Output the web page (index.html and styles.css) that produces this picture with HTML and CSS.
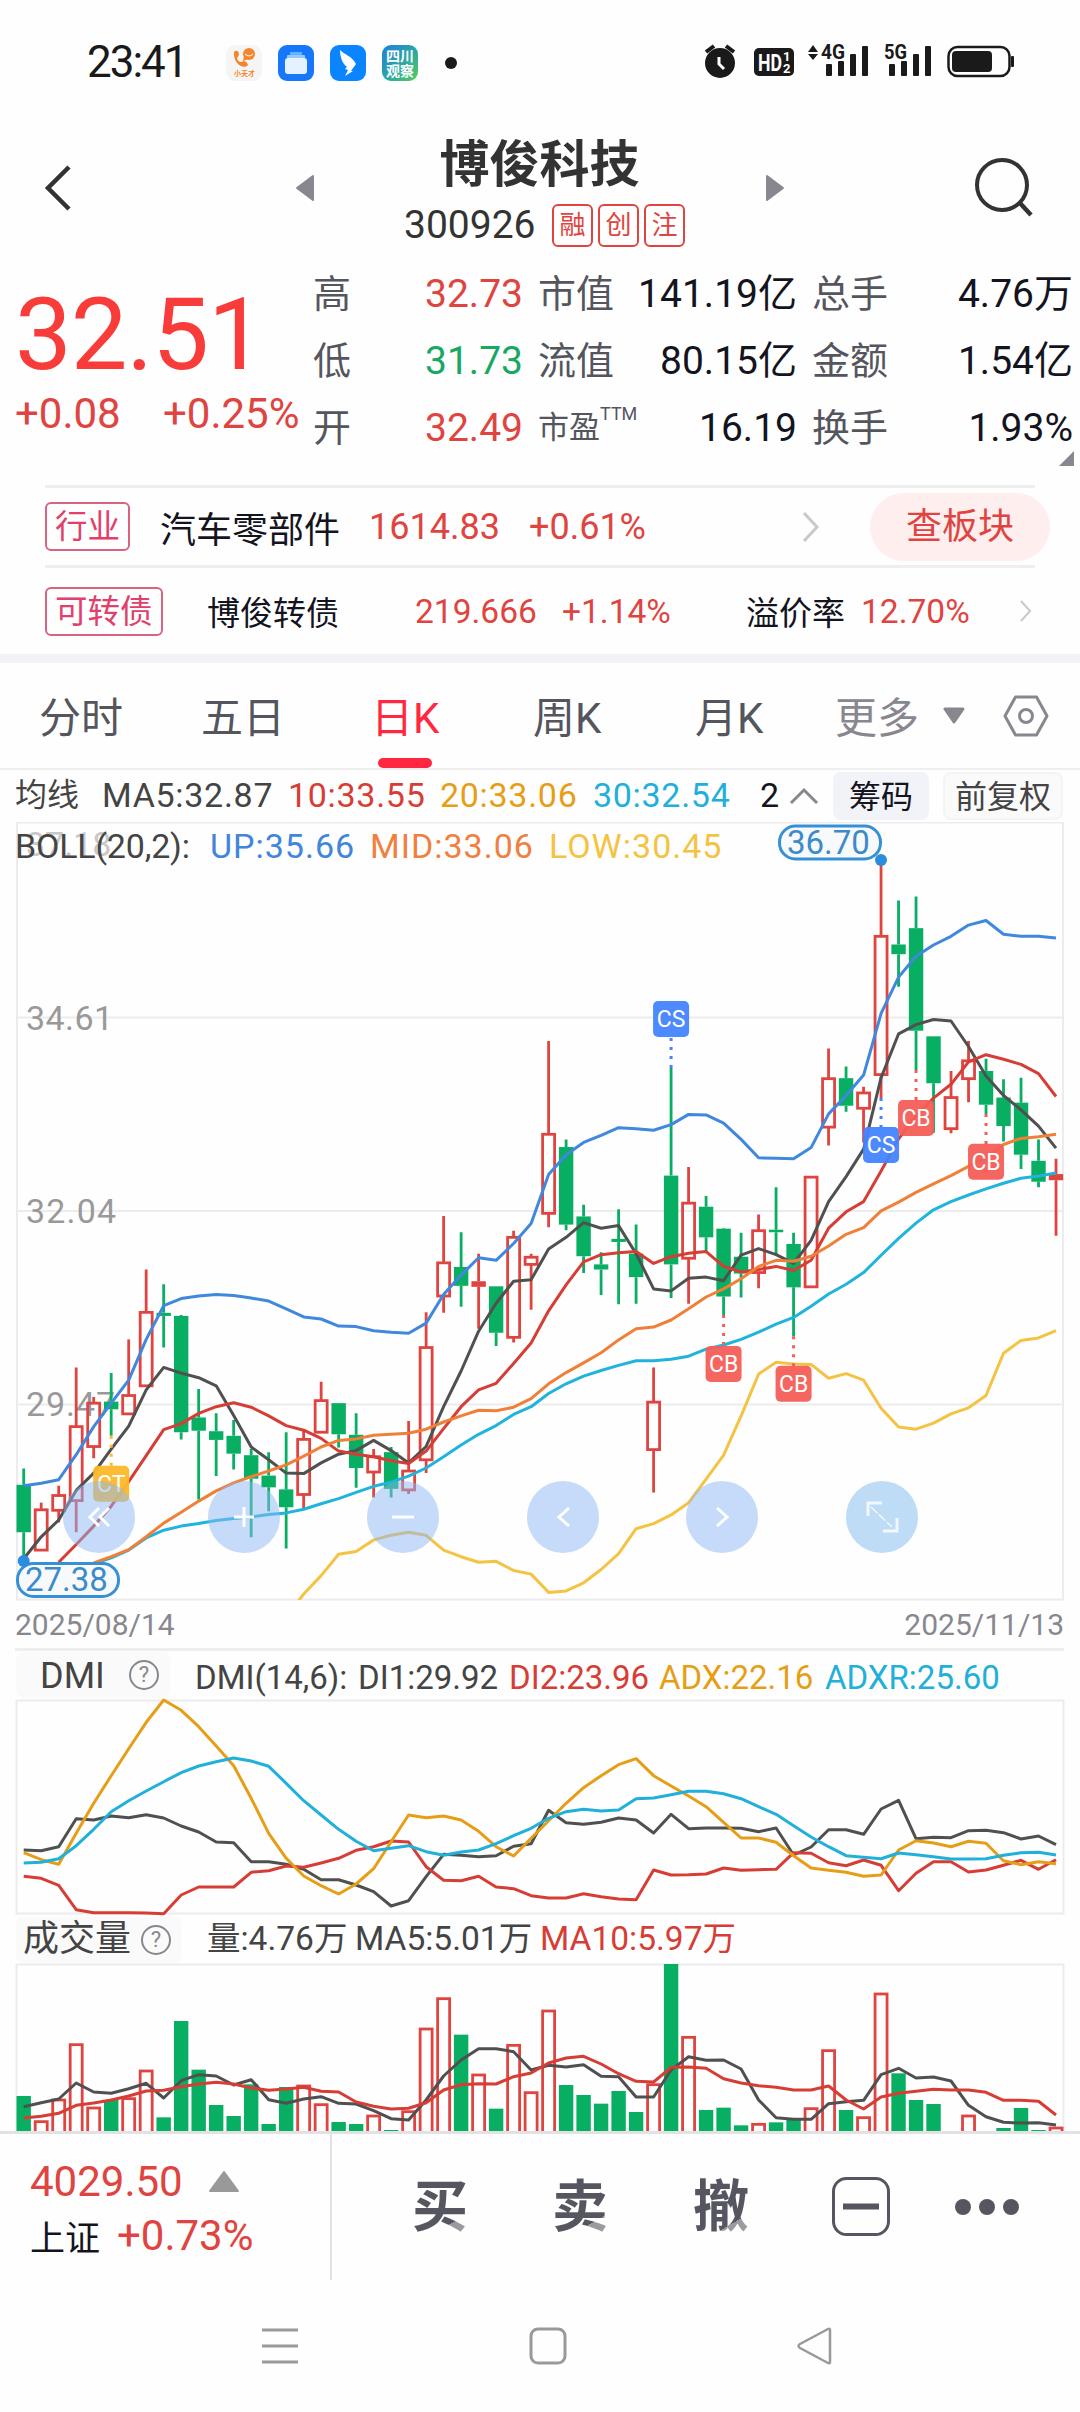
FILE: index.html
```html
<!DOCTYPE html>
<html lang="zh-CN">
<head>
  <meta charset="UTF-8" />
  <meta name="viewport" content="width=device-width, initial-scale=1.0"/>
  <title>博俊科技 300926</title>
  <link rel="stylesheet" href="styles.css">
</head>
<body>
  <div class="status-bar">
    <span class="clock">23:41</span>
    <div class="app-icons">
      <svg width="36" height="36" viewBox="0 0 36 36">
        <rect width="36" height="36" rx="9" fill="#f5f5f5"/>
        <path d="M8 7c3-3 5 0 5 3l-2 3c0 2 2 4 4 4l3-1c2 0 4 3 4 4-4 5-15-1-14-13z" fill="#f5852a"/>
        <circle cx="23" cy="9" r="6" fill="#f5852a"/>
        <path d="M18 11l-1 5 5-2z" fill="#f5852a"/>
        <path d="M19 9q4 4 8 0" stroke="#fff" fill="none"/>
        <text x="8" y="31" font-size="7" font-weight="bold" fill="#f5852a">小天才</text>
      </svg>
      <svg width="36" height="36" viewBox="0 0 36 36">
        <rect width="36" height="36" rx="9" fill="#1677fb"/>
        <rect x="12" y="7" width="12" height="3" rx="1" fill="#68b2fd"/>
        <rect x="9" y="10" width="18" height="4" rx="1" fill="#93c8fe"/>
        <rect x="7" y="13" width="22" height="16" rx="3" fill="#e6f1ff"/>
      </svg>
      <svg width="36" height="36" viewBox="0 0 36 36">
        <rect width="36" height="36" rx="9" fill="#0a84ff"/>
        <path d="M10 5c5 5 12 6 16 14l-5 7h2l-8 5 3-6-3-1 2-2c-4-3-7-9-7-17z" fill="#fff"/>
      </svg>
      <svg width="36" height="36" viewBox="0 0 36 36">
        <defs>
          <linearGradient id="scg" x1="0" y1="0" x2="1" y2="1">
            <stop offset="0" stop-color="#1f7fd8"/>
            <stop offset=".55" stop-color="#2ba8a4"/>
            <stop offset="1" stop-color="#55cf5a"/>
          </linearGradient>
        </defs>
        <rect width="36" height="36" rx="9" fill="url(#scg)"/>
        <text x="4" y="16" font-size="14" font-weight="bold" fill="#fff">四川</text>
        <text x="4" y="31" font-size="14" font-weight="bold" fill="#fff">观察</text>
      </svg>
      <i class="more-dot"></i>
    </div>
    <svg class="sys-icons" width="320" height="36" viewBox="0 0 320 36" fill="#1a1a1a">
      <circle cx="16" cy="19" r="15"/>
      <path d="M2 8l8-6M30 8l-8-6" stroke="#1a1a1a" stroke-width="4"/>
      <path d="M15 13v7l5 5" stroke="#fff" stroke-width="3" fill="none"/>
      <rect x="50" y="4" width="40" height="28" rx="5"/>
      <text x="54" y="27" font-size="23" font-weight="bold" fill="#fff" textLength="24" lengthAdjust="spacingAndGlyphs">HD</text>
      <text x="79" y="17" font-size="13" font-weight="bold" fill="#fff">1</text>
      <text x="79" y="29" font-size="13" font-weight="bold" fill="#fff">2</text>
      <path d="M104 8l5-7 5 7zM104 10l5 6 5-6z"/>
      <text x="117" y="15" font-size="20" font-weight="bold" textLength="24" lengthAdjust="spacingAndGlyphs">4G</text>
      <rect x="122" y="20" width="6" height="12" rx="1"/>
      <rect x="134" y="17" width="6" height="15" rx="1"/>
      <rect x="146" y="10" width="6" height="22" rx="1"/>
      <rect x="158" y="2" width="6" height="30" rx="1"/>
      <text x="180" y="15" font-size="20" font-weight="bold" textLength="23" lengthAdjust="spacingAndGlyphs">5G</text>
      <rect x="185" y="20" width="6" height="12" rx="1"/>
      <rect x="197" y="17" width="6" height="15" rx="1"/>
      <rect x="209" y="10" width="6" height="22" rx="1"/>
      <rect x="221" y="2" width="6" height="30" rx="1"/>
      <rect x="244.500" y="3" width="61" height="29" rx="9" fill="none" stroke="#1a1a1a" stroke-width="2.500"/>
      <rect x="248" y="7" width="40" height="21" rx="4"/>
      <rect x="307" y="12" width="3" height="11" rx="1"/>
    </svg>
  </div>

  <div class="header">
    <svg class="back" width="28" height="46" viewBox="0 0 28 46"><path d="M25 2L4 23l21 21" fill="none" stroke="#333" stroke-width="4.500"/></svg>
    <svg class="prev" width="20" height="28" viewBox="0 0 20 28"><path d="M18 2v24L2 14z" fill="#88878f" stroke="#88878f" stroke-width="2" stroke-linejoin="round"/></svg>
    <div class="title">
      <h1>博俊科技</h1>
      <div class="code-row">
        <span class="code">300926</span>
        <span class="mini-tag">融</span>
        <span class="mini-tag">创</span>
        <span class="mini-tag">注</span>
      </div>
    </div>
    <svg class="next" width="20" height="28" viewBox="0 0 20 28"><path d="M2 2v24l16-12z" fill="#88878f" stroke="#88878f" stroke-width="2" stroke-linejoin="round"/></svg>
    <svg class="search" width="60" height="62" viewBox="0 0 60 62"><circle cx="28" cy="28" r="25" fill="none" stroke="#333" stroke-width="4"/><path d="M45 45l12 13" stroke="#333" stroke-width="4.500"/></svg>
  </div>

  <div class="quote">
    <div class="price-box">
      <div class="price">32.51</div>
      <div class="change"><span>+0.08</span><span>+0.25%</span></div>
    </div>
    <div class="stats">
      <span class="label">高</span><span class="val up">32.73</span>
      <span class="label">市值</span><span class="val">141.19亿</span>
      <span class="label">总手</span><span class="val">4.76万</span>
      <span class="label">低</span><span class="val down">31.73</span>
      <span class="label">流值</span><span class="val">80.15亿</span>
      <span class="label">金额</span><span class="val">1.54亿</span>
      <span class="label">开</span><span class="val up">32.49</span>
      <span class="label pe">市盈<sup>TTM</sup></span><span class="val">16.19</span>
      <span class="label">换手</span><span class="val">1.93%</span>
    </div>
    <svg class="corner" width="15" height="15" viewBox="0 0 15 15"><path d="M15 0v15H0z" fill="#88878f"/></svg>
  </div>

  <div class="link-row industry">
    <span class="tag">行业</span>
    <span class="dark">汽车零部件</span>
    <span class="up">1614.83</span>
    <span class="up">+0.61%</span>
    <svg width="18" height="32" viewBox="0 0 18 32"><path d="M2 2l13 14L2 30" fill="none" stroke="#c9c9c9" stroke-width="3"/></svg>
    <span class="pill">查板块</span>
  </div>
  <div class="link-row bond">
    <span class="tag">可转债</span>
    <span class="dark">博俊转债</span>
    <span class="up">219.666</span>
    <span class="up">+1.14%</span>
    <span class="dark">溢价率</span>
    <span class="up">12.70%</span>
    <svg width="13" height="24" viewBox="0 0 13 24"><path d="M2 2l9 10L2 22" fill="none" stroke="#c9c9c9" stroke-width="2"/></svg>
  </div>

  <div class="tabs">
    <span>分时</span>
    <span>五日</span>
    <span class="active">日K</span>
    <span>周K</span>
    <span>月K</span>
    <span class="more">更多</span>
    <svg width="22" height="18" viewBox="0 0 22 18"><path d="M2 2h18l-9 13z" fill="#88878f" stroke="#88878f" stroke-width="3" stroke-linejoin="round"/></svg>
    <svg width="46" height="42" viewBox="0 0 46 42" fill="none" stroke="#88878f" stroke-width="3"><path d="M12.500 2h21L44 21 33.500 40h-21L2 21z" stroke-linejoin="round"/><circle cx="23" cy="21" r="6.500"/></svg>
  </div>

  <div class="ma-row">
    <span>均线</span>
    <span>MA5:32.87</span>
    <span class="red">10:33.55</span>
    <span class="gold">20:33.06</span>
    <span class="cyan">30:32.54</span>
    <span class="dark">2</span>
    <svg width="30" height="18" viewBox="0 0 30 18"><path d="M2 16L15 3l13 13" fill="none" stroke="#88878f" stroke-width="3"/></svg>
    <span class="chip chip-on">筹码</span>
    <span class="chip">前复权</span>
  </div>

  <div class="k-chart">
    <svg id="kline" width="1080" height="782" viewBox="0 2 1080 782">
      <clipPath id="frame"><rect x="16" y="2" width="1048" height="778"/></clipPath>
      <g stroke="#ececee" stroke-width="2" fill="none">
        <rect x="17" y="2.500" width="1046" height="777"/>
        <path d="M17 197.500h1046M17 391h1046M17 584.500h1046"/>
      </g>
      <g font-size="34" fill="#999">
        <text x="26" y="36" fill="#c8c8c8">37.18</text>
        <text x="26" y="210" textLength="87">34.61</text>
        <text x="26" y="403" textLength="90">32.04</text>
        <text x="26" y="596" textLength="89">29.47</text>
      </g>
      <g id="candles"></g>
      <g id="klines" fill="none" stroke-width="3" clip-path="url(#frame)"></g>
      <g id="flags"></g>
      <g fill="#f8f9fa" stroke="#3690d6" stroke-width="3">
        <rect x="779.500" y="6" width="101" height="33" rx="16"/>
        <rect x="17.500" y="743.500" width="101" height="33" rx="16"/>
      </g>
      <g font-size="33" fill="#3b8bcb">
        <text x="787" y="34">36.70</text>
        <text x="25" y="771">27.38</text>
      </g>
      <circle cx="881" cy="40" r="6" fill="#2c8de0"/>
      <circle cx="23.700" cy="741" r="6" fill="#2c8de0"/>
      <g fill="#8cb8f3" fill-opacity=".5">
        <circle cx="99" cy="697" r="36"/>
        <circle cx="244" cy="697" r="36"/>
        <circle cx="403" cy="697" r="36"/>
        <circle cx="563" cy="697" r="36"/>
        <circle cx="722" cy="697" r="36"/>
        <circle cx="882" cy="697" r="36" fill="#80b9ee"/>
      </g>
      <g fill="none" stroke="#fff" stroke-width="3">
        <path d="M99 688l-9 9 9 9M109 688l-9 9 9 9"/>
        <path d="M234 697h20M244 687v20M392 697h22"/>
        <path d="M569 688l-10 9 10 9M717 688l10 9-10 9"/>
        <path d="M868 696v-13h14M883 711h14v-13" opacity=".8"/>
        <path d="M871 687l21 20" stroke-width="1.500" stroke-dasharray="9 2" opacity=".8"/>
      </g>
    </svg>
    <div class="boll-row">
      <span>BOLL(20,2):</span>
      <span class="blue">UP:35.66</span>
      <span class="orange">MID:33.06</span>
      <span class="yellow">LOW:30.45</span>
    </div>
  </div>
  <div class="dates"><span>2025/08/14</span><span>2025/11/13</span></div>

  <div class="ind-row dmi-row">
    <span class="ind-tag">DMI<i class="help">?</i></span>
    <span>DMI(14,6):</span>
    <span>DI1:29.92</span>
    <span class="red">DI2:23.96</span>
    <span class="gold">ADX:22.16</span>
    <span class="cyan">ADXR:25.60</span>
  </div>
  <svg class="sub-chart" width="1080" height="218" viewBox="0 98 1080 218">
    <rect x="16.500" y="100.500" width="1047" height="213" fill="none" stroke="#ececee" stroke-width="2"/>
    <g id="dmi" fill="none" stroke-width="3"></g>
  </svg>

  <div class="ind-row vol-row">
    <span class="ind-tag">成交量<i class="help">?</i></span>
    <span>量:4.76万</span>
    <span>MA5:5.01万</span>
    <span class="red">MA10:5.97万</span>
  </div>
  <svg class="sub-chart" width="1080" height="168" viewBox="0 63 1080 168">
    <path d="M16.500 231V64.500h1047V231" fill="none" stroke="#ececee" stroke-width="2"/>
    <g id="volume"></g>
    <g id="vol-ma" fill="none" stroke-width="3"></g>
  </svg>

  <div class="trade-bar">
    <div class="index-box">
      <div class="index-top">4029.50<svg width="32" height="22" viewBox="0 0 32 22"><path d="M16 2L30 21H2z" fill="#999" stroke="#999" stroke-width="2" stroke-linejoin="round"/></svg></div>
      <div class="index-bottom"><span>上证</span><b>+0.73%</b></div>
    </div>
    <div class="actions">
      <span>买</span>
      <span>卖</span>
      <span>撤</span>
      <svg width="58" height="60" viewBox="0 0 58 60"><rect x="1.500" y="1.500" width="55" height="56" rx="13" fill="none" stroke="#555660" stroke-width="3"/><path d="M11 29.500h36" stroke="#555660" stroke-width="6"/></svg>
      <svg width="66" height="18" viewBox="0 0 66 18" fill="#555660"><circle cx="9" cy="9" r="8"/><circle cx="33" cy="9" r="8"/><circle cx="57" cy="9" r="8"/></svg>
    </div>
  </div>

  <div class="nav-bar">
    <svg width="38" height="38" viewBox="0 0 38 38" stroke="#999" stroke-width="3"><path d="M1 3h36M1 19h36M1 35h36"/></svg>
    <svg width="38" height="38" viewBox="0 0 38 38" fill="none" stroke="#999" stroke-width="3"><rect x="2" y="2" width="34" height="34" rx="7"/></svg>
    <svg width="38" height="38" viewBox="0 0 38 38" fill="none" stroke="#999" stroke-width="2.500" stroke-linejoin="round"><path d="M33 3v32q0 2-2 1L3 21q-3-2 0-4L31 2q2-1 2 1z"/></svg>
  </div>

  <script src="chart.js"></script>
</body>
</html>
```

FILE: styles.css
```css
* {
  box-sizing: border-box;
}

body {
  margin: 0;
  width: 1080px;
  height: 2412px;
  overflow: hidden;
  background: #fefefe;
  color: #444;
  font-family: Roboto, "Noto Sans CJK SC", sans-serif;
}

svg {
  display: block;
}

.up { color: #e04440; }
.down { color: #18a863; }
.dark { color: #14141f; }
.red { color: #d63d35; }
.gold { color: #e69e17; }
.cyan { color: #20b0da; }
.blue { color: #4185dc; }
.orange { color: #f08040; }
.yellow { color: #f5c344; }

/* status bar */
.status-bar {
  height: 124px;
  display: flex;
  align-items: center;
  padding-left: 87px;
}

.clock {
  width: 139px;
  font-size: 44px;
  letter-spacing: -2px;
  color: #1a1a1a;
}

.app-icons {
  display: flex;
  align-items: center;
  gap: 16px;
  width: 473px;
  padding-top: 2px;
}

.more-dot {
  width: 12px;
  height: 12px;
  margin-left: 11px;
  border-radius: 50%;
  background: #1a1a1a;
}

.sys-icons {
  margin-left: 5px;
  overflow: visible;
}

/* header */
.header {
  height: 136px;
  display: grid;
  grid-template-columns: 295px 92px 378px 209px 1fr;
}

.back { margin: 41px 0 0 44px; }
.prev { margin-top: 50px; }
.title { text-align: center; width: 305px; }
.next { margin-top: 50px; }
.search { margin-top: 33px; }

.title h1 {
  margin: 0;
  padding-top: 3px;
  font-size: 50px;
  line-height: 76px;
  color: #333;
}

.code-row {
  display: flex;
  gap: 5px;
  padding-left: 17px;
  align-items: center;
  height: 46px;
  margin-top: -1px;
}

.code {
  width: 143px;
  font-size: 39px;
  text-align: left;
  color: #333;
}

.mini-tag {
  width: 41px;
  height: 43px;
  border: 2px solid #e04440;
  border-radius: 6px;
  font-size: 26px;
  line-height: 38px;
  color: #e04440;
}

/* quote */
.quote {
  position: relative;
  display: flex;
  height: 225px;
}

.price-box {
  width: 313px;
  padding-left: 15px;
}

.price {
  height: 129px;
  padding-top: 16px;
  font-size: 101px;
  line-height: 118px;
  letter-spacing: -1px;
  color: #f83c3a;
}

.change {
  display: flex;
  font-size: 42px;
  line-height: 50px;
  color: #e04440;
}

.change span {
  width: 148px;
}

.stats {
  display: grid;
  grid-template-columns: 82px 128px 98px 176px 98px 178px;
  grid-template-rows: repeat(3, 67px);
  line-height: 68px;
}

.label {
  font-size: 38px;
  color: #55555e;
  white-space: nowrap;
}

.val {
  font-size: 39px;
  text-align: right;
  color: #14141f;
}

.val.up { color: #e04440; }
.val.down { color: #18a863; }
.stats .label:nth-child(6n+3),
.stats .label:nth-child(6n+5) { padding-left: 15px; }

.label.pe {
  font-size: 31px;
}

.pe sup {
  font-size: 18px;
  line-height: 0;
  vertical-align: 18px;
}

.corner {
  position: absolute;
  left: 1059px;
  top: 191px;
}

/* industry and bond rows */
.link-row {
  display: grid;
  align-items: center;
  margin: 0 45px;
  border-top: 3px solid #eeeeee;
  white-space: nowrap;
}

.industry {
  height: 80px;
  grid-template-columns: 115px 209px 160px 273px 68px 180px;
  font-size: 36px;
  width: 990px;
}

.bond {
  height: 89px;
  grid-template-columns: 162px 208px 147px 184px 115px 158px 13px;
  font-size: 33px;
  width: 990px;
}

.bond .up {
  font-size: 33.5px;
}

.tag {
  justify-self: start;
  height: 49px;
  padding: 0 8px;
  border: 2px solid #d96482;
  border-radius: 6px;
  font-size: 32.5px;
  line-height: 47px;
  color: #e0406a;
}

.pill {
  height: 68px;
  border-radius: 34px;
  background: #ffeeee;
  color: #e04440;
  text-align: center;
  line-height: 69px;
}

/* tabs */
.tabs {
  display: grid;
  grid-template-columns: 162px 170px 162px 162px 140px 108px 60px 46px;
  align-items: center;
  height: 116px;
  padding: 0 0 0 39px;
  border-top: 9px solid #f2f3f8;
  border-bottom: 2px solid #eeeeee;
  font-size: 42px;
  line-height: 105px;
  color: #55555e;
}

.tabs span {
  padding-top: 3px;
  height: 105px;
}

.tabs .active {
  position: relative;
  color: #ff2840;
}

.tabs .active::after {
  content: "";
  position: absolute;
  left: 7px;
  bottom: 0;
  width: 54px;
  height: 10px;
  border-radius: 5px;
  background: #ff2840;
}

.tabs .more {
  color: #88878f;
}

/* moving averages */
.ma-row {
  display: grid;
  grid-template-columns: 87px 186px 152px 153px 167px 29px 44px 110px 120px;
  align-items: center;
  height: 52px;
  padding-left: 15px;
  font-size: 34px;
  letter-spacing: 0.7px;
  line-height: 50px;
  white-space: nowrap;
}

.ma-row span {
  height: 52px;
}

.ma-row span:first-child {
  font-size: 32px;
  letter-spacing: 0;
}

.ma-row .chip {
  width: 120px;
  height: 48px;
  border: 2px solid #f4f4f4;
  border-radius: 8px;
  background: #fafafa;
  font-size: 32px;
  letter-spacing: 0;
  line-height: 46px;
  text-align: center;
}

.ma-row .chip-on {
  width: 96px;
  border-color: #f2f3f8;
  background: #f2f3f8;
  color: #14141f;
}

.k-chart {
  position: relative;
  height: 782px;
}

.boll-row {
  position: absolute;
  left: 15px;
  top: 3px;
  display: grid;
  grid-template-columns: 195px 160px 179px 180px;
  font-size: 34px;
  line-height: 42px;
  letter-spacing: 1px;
}

.boll-row span:first-child {
  letter-spacing: -0.2px;
}

.dates {
  display: flex;
  justify-content: space-between;
  height: 47px;
  margin: 0 16px 0 15px;
  border-bottom: 3px solid #eeeeee;
  font-size: 30px;
  line-height: 42px;
  color: #88878f;
}

/* indicators */
.ind-row {
  display: grid;
  align-items: center;
  height: 47px;
  padding-left: 16px;
  font-size: 33px;
  white-space: nowrap;
}

.dmi-row {
  grid-template-columns: 179px 163px 151px 150px 166px 180px;
}

.dmi-row > span {
  height: 46px;
  padding-top: 3px;
  line-height: 46px;
}

.vol-row {
  grid-template-columns: 191px 148px 185px 200px;
  font-size: 33.5px;
}

.vol-row > span {
  height: 46px;
  line-height: 43px;
}

.ind-row .ind-tag {
  display: flex;
  align-items: center;
  justify-content: space-between;
  width: 154px;
  height: 46px;
  padding: 2px 11px 0 24px;
  border-radius: 8px;
  background: #fafafa;
  font-size: 36px;
}

.vol-row .ind-tag {
  width: 166px;
  padding: 0 11px 0 7px;
}

.help {
  width: 30px;
  height: 30px;
  border: 2px solid #88878f;
  border-radius: 50%;
  font-size: 22px;
  line-height: 26px;
  text-align: center;
  font-style: normal;
  color: #88878f;
}

.dmi-row .help {
  margin-top: -2px;
}

/* bottom bar */
.trade-bar {
  display: flex;
  height: 149px;
  border-top: 3px solid #e2e2e4;
}

.index-box {
  width: 332px;
  padding: 22px 0 0 30px;
  border-right: 2px solid #e2e2e4;
  font-size: 42px;
  color: #e04440;
}

.index-top {
  display: flex;
  align-items: center;
  gap: 25px;
  height: 50px;
}

.index-bottom {
  display: flex;
  align-items: center;
  height: 58px;
}

.index-bottom span {
  width: 87px;
  font-size: 35px;
  color: #14141f;
}

.index-bottom b {
  font-weight: normal;
}

.actions {
  display: grid;
  grid-template-columns: 140px 141px 139px 122px 66px;
  align-items: center;
  height: 146px;
  padding-left: 80px;
}

.actions span {
  width: 56px;
  font-size: 56px;
  font-weight: bold;
  line-height: 72px;
  color: transparent;
  background: linear-gradient(150deg, #555660 72%, #9b9b9f 72%);
  -webkit-background-clip: text;
  background-clip: text;
}

.nav-bar {
  display: flex;
  align-items: center;
  gap: 230px;
  height: 132px;
  padding-left: 261px;
}
```

FILE: chart.js
```js
const NS = "http://www.w3.org/2000/svg";
const RED = "#e04440";
const GREEN = "#08ae62";

// vertical divisors from data units to pixels
const K_DIV = 1.96;
const SUB_DIV = 3;

function x(i) {
  return 23.7 + i * 17.497;
}

function add(parent, tag, attrs, text) {
  const el = document.createElementNS(NS, tag);
  for (const key in attrs) el.setAttribute(key, attrs[key]);
  if (text) el.textContent = text;
  parent.appendChild(el);
  return el;
}

function line(parent, start, values, div, color) {
  const points = values.map((v, i) => `${x(start + i).toFixed(1)},${(v / div).toFixed(1)}`).join(" ");
  add(parent, "polyline", { points, stroke: color, "stroke-linejoin": "round" });
}

// colour, high, body top, body bottom, low ("f" is a filled red doji)
const candles = [
  ["g",1271,1303,1396,1450],["r",1338,1352,1431,1431],["r",1305,1324,1353,1377],["r",1073,1189,1334,1396],
  ["r",1131,1143,1228,1251],["g",1084,1140,1155,1207],["r",1018,1128,1164,1164],["r",881,965,1109,1109],
  ["g",910,966,972,1034],["g",970,972,1200,1214],["g",1115,1171,1197,1332],["g",1163,1198,1215,1286],
  ["g",1176,1207,1242,1273],["g",1233,1245,1291,1406],["g",1239,1285,1308,1355],["g",1200,1312,1347,1428],
  ["r",1197,1214,1322,1349],["r",1101,1138,1200,1200],["g",1143,1143,1204,1230],["g",1163,1205,1270,1309],
  ["r",1233,1248,1278,1328],["g",1229,1239,1311,1328],["r",1178,1276,1313,1321],["r",965,1034,1254,1280],
  ["r",776,868,933,966],["g",808,876,913,954],["f",850,904,915,997],["g",914,914,1005,1031],
  ["r",805,818,1014,1024],["r",850,857,871,960],["r",433,616,771,798],["g",626,641,793,804],
  ["g",754,777,855,888],["g",847,871,881,931],["g",763,821,827,949],["g",793,850,896,948],
  ["r",1073,1141,1234,1318],["g",486,697,871,937],["r",680,751,859,948],["g",737,758,818,848],
  ["g",800,801,934,970],["g",809,856,889,936],["r",773,805,887,918],["g",720,803,808,853],
  ["g",809,831,916,1012],["r",699,700,915,915],["r",448,507,602,638],["g",483,506,560,572],
  ["r",523,535,565,632],["r",88,228,499,545],["g",158,244,263,327],["g",150,212,413,490],
  ["g",424,424,516,613],["r",492,544,605,614],["r",433,472,507,553],["g",468,492,558,576],
  ["g",508,544,600,630],["g",505,554,656,684],["g",626,668,709,720],["f",664,694,706,815]
];

const candleBox = document.getElementById("candles");
candles.forEach(([type, high, top, bottom, low], i) => {
  const cx = x(i);
  const color = type === "g" ? GREEN : RED;
  const [h, t, b, l] = [high, top, bottom, low].map(v => v / K_DIV);
  add(candleBox, "path", { d: `M${cx} ${h}V${t}M${cx} ${b}V${l}`, stroke: color, "stroke-width": 2.8 });
  if (type === "r") {
    add(candleBox, "rect", { x: cx - 6, y: t, width: 12, height: b - t, fill: "none", stroke: color, "stroke-width": 2.8 });
  } else {
    add(candleBox, "rect", { x: cx - 7.2, y: t, width: 14.4, height: b - t, fill: color });
  }
});

const k = document.getElementById("klines");
// 30-day average
line(k, 4, [1458,1446,1431,1407,1392,1384,1379,1373,1369,1366,1361,1358,1351,1340,1330,1318,1306,1298,1286,1270,1248,1225,1204,1187,1165,1150,1124,1105,1090,1079,1069,1060,1060,1057,1051,1037,1029,1018,1004,988,975,953,929,910,887,853,820,790,764,748,735,723,712,702,698,692], K_DIV, "#20b4dc");
// 5-day average
line(k, 0, [1448,1405,1372,1314,1280,1233,1188,1117,1073,1084,1093,1109,1167,1229,1254,1280,1281,1260,1243,1236,1216,1236,1260,1228,1150,1080,1002,947,904,901,841,818,789,800,795,850,919,923,898,896,903,853,840,852,869,824,748,699,645,505,419,401,391,394,444,502,540,568,600,643], K_DIV, "#505050");
// 10-day average
line(k, 2, [1455,1420,1384,1345,1297,1246,1195,1183,1163,1150,1142,1151,1168,1187,1196,1212,1237,1243,1248,1256,1261,1237,1193,1150,1117,1104,1065,1025,962,911,866,852,848,846,869,856,849,846,875,886,881,875,883,863,800,768,748,688,625,580,545,518,474,460,469,479,497,542], K_DIV, "#d63d35");
// Bollinger: middle, upper, lower
line(k, 4, [1456,1444,1430,1405,1378,1357,1335,1315,1299,1287,1276,1264,1247,1229,1216,1213,1206,1204,1202,1194,1180,1168,1157,1158,1151,1134,1105,1083,1064,1044,1019,997,994,980,958,935,919,899,875,863,865,855,835,812,799,766,749,730,713,697,679,662,636,624,621,616], K_DIV, "#f08038");
line(k, 0, [1305,1300,1293,1244,1189,1143,1098,1018,952,938,933,930,932,937,943,958,974,978,992,993,1001,1004,1006,986,930,892,858,863,830,791,695,656,632,618,603,605,608,597,577,578,594,626,662,663,664,642,576,540,500,379,308,267,245,228,206,197,224,228,228,231], K_DIV, "#4088de");
line(k, 15, [1562,1517,1481,1439,1434,1411,1402,1396,1402,1431,1444,1455,1453,1471,1478,1514,1511,1495,1469,1438,1389,1379,1362,1338,1292,1245,1168,1086,1063,1066,1067,1094,1085,1098,1153,1190,1194,1182,1164,1152,1128,1045,1020,1015,1001], K_DIV, "#f5c344");

// index, label, dotted line from / to, box centre
const flags = [
  [5,"CT",1207,1266,1301,"#fcb92a"],
  [37,"CS",486,425,390,"#4284fd"],
  [40,"CB",970,1031,1066,"#f35e56"],
  [44,"CB",1012,1070,1105,"#f35e56"],
  [49,"CS",545,603,637,"#4284fd"],
  [51,"CB",490,549,584,"#f35e56"],
  [55,"CB",576,635,670,"#f35e56"]
];
const flagBox = document.getElementById("flags");
flags.forEach(([i, label, from, to, center, color]) => {
  const cx = x(i);
  const cy = center / K_DIV;
  add(flagBox, "path", { d: `M${cx} ${from / K_DIV}V${to / K_DIV}`, stroke: color, "stroke-width": 3, "stroke-dasharray": "3 6" });
  add(flagBox, "rect", { x: cx - 18, y: cy - 18, width: 36, height: 36, rx: 5, fill: color, "fill-opacity": 0.95 });
  add(flagBox, "text", { x: cx, y: cy + 8, "font-size": 23, fill: "#fff", "text-anchor": "middle" }, label);
});

const dmi = document.getElementById("dmi");
line(dmi, 0, [750,752,740,656,660,648,653,644,654,678,696,726,728,785,785,793,808,839,839,855,875,918,902,830,763,766,770,767,739,731,631,668,673,667,654,660,699,643,686,684,684,685,695,684,765,741,689,689,703,627,601,716,712,713,692,691,698,717,708,734], SUB_DIV, "#505050");
line(dmi, 0, [829,835,856,929,938,938,938,939,941,885,861,861,861,817,812,798,802,789,775,751,740,723,726,800,841,842,829,861,866,887,894,894,881,890,897,899,810,825,824,822,804,811,809,808,758,760,788,797,780,796,872,820,785,785,816,810,796,781,808,779], SUB_DIV, "#d63d35");
line(dmi, 0, [758,779,793,700,610,527,446,367,300,331,380,438,497,595,700,775,828,857,882,852,806,725,645,653,648,660,694,740,768,715,662,610,563,527,494,476,527,558,588,620,667,714,714,727,767,804,811,817,829,825,750,722,729,740,724,730,782,794,785,791], SUB_DIV, "#e69e17");
line(dmi, 0, [789,787,776,737,688,635,602,573,545,518,498,485,474,483,499,550,602,645,688,724,752,745,737,755,766,756,750,731,707,685,655,635,628,633,630,596,594,584,574,574,581,596,620,643,677,711,740,767,772,776,759,764,770,777,777,776,766,758,757,765], SUB_DIV, "#20b0da");

const volumes = [
  ["g",588],["r",662],["r",597],["r",431],["r",621],["g",600],["r",593],["r",510],["g",652],["g",363],
  ["g",509],["g",615],["g",648],["g",553],["g",672],["g",561],["r",555],["r",611],["g",666],["g",672],
  ["r",645],["g",690],["r",632],["r",384],["r",293],["g",404],["r",522],["g",626],["r",433],["r",575],
  ["r",330],["g",555],["g",585],["g",611],["g",573],["g",636],["r",551],["g",192],["r",409],["g",630],
  ["g",623],["g",676],["r",670],["g",667],["g",659],["r",623],["r",449],["g",630],["r",650],["r",279],
  ["g",520],["g",600],["g",612],null,["r",645],null,["g",684],["g",624],["g",690],["r",681]
];
const volBox = document.getElementById("volume");
volumes.forEach((v, i) => {
  if (!v) return;
  const top = v[1] / SUB_DIV;
  if (v[0] === "g") {
    add(volBox, "rect", { x: x(i) - 7.2, y: top, width: 14.4, height: 231 - top, fill: GREEN });
  } else {
    add(volBox, "rect", { x: x(i) - 6, y: top + 1, width: 12, height: 240 - top, fill: "none", stroke: RED, "stroke-width": 2.8 });
  }
});

const volMa = document.getElementById("vol-ma");
line(volMa, 0, [620,608,597,549,576,580,566,550,594,542,524,528,555,539,599,610,597,590,610,612,632,656,660,600,528,480,446,446,455,510,496,501,494,529,530,591,591,510,470,481,480,507,600,653,658,658,611,605,601,524,505,534,531,543,616,650,667,669,668,675], SUB_DIV, "#505050");
line(volMa, 0, [654,649,640,616,609,600,588,573,571,560,552,547,552,564,571,567,562,574,576,606,619,627,625,608,570,554,551,552,530,519,489,474,469,492,521,544,546,502,501,505,536,549,557,562,570,570,558,600,627,591,580,574,568,570,570,577,601,601,604,645], SUB_DIV, "#d63d35");
```
